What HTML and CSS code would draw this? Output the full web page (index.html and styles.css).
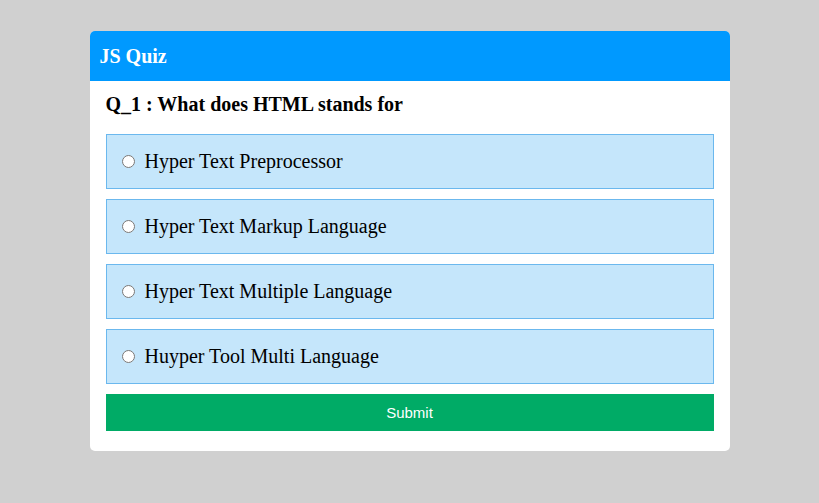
FILE: index.html
```html
<!DOCTYPE html>
<html>
<head>
<meta charset="utf-8">
<link rel="stylesheet" href="styles.css">
</head>
<body>
<div class="card">
  <div class="card-header">JS Quiz</div>
  <div class="card-body">
    <h3 class="question">Q_1 : What does HTML stands for</h3>
    <div class="options">
      <label class="option"><input type="radio" name="q1"><span>Hyper Text Preprocessor</span></label>
      <label class="option"><input type="radio" name="q1"><span>Hyper Text Markup Language</span></label>
      <label class="option"><input type="radio" name="q1"><span>Hyper Text Multiple Language</span></label>
      <label class="option"><input type="radio" name="q1"><span>Huyper Tool Multi Language</span></label>
    </div>
    <button class="submit">Submit</button>
  </div>
</div>
</body>
</html>
```
FILE: styles.css
```css
html, body {
  margin: 0;
  padding: 0;
}
body {
  background: #d0d0d0;
  font-family: "Liberation Serif", "Times New Roman", serif;
  display: flex;
  justify-content: center;
  padding-top: 31px;
}
.card {
  width: 640px;
  background: #ffffff;
  border-radius: 5px;
  overflow: hidden;
}
.card-header {
  height: 50px;
  background: #0099ff;
  color: #ffffff;
  font-weight: bold;
  font-size: 20px;
  display: flex;
  align-items: center;
  padding-left: 10px;
}
.card-body {
  padding: 0 16px 20px;
}
.question {
  margin: 0;
  padding: 12px 0 19px;
  font-size: 20px;
  line-height: 22px;
  font-weight: bold;
  color: #000;
}
.options {
  display: flex;
  flex-direction: column;
  gap: 10px;
}
.option {
  height: 53px;
  display: flex;
  align-items: center;
  border: 1px solid #6bb8ee;
  background: #c5e6fb;
  font-size: 20px;
  color: #000;
  padding-left: 15px;
}
.option input {
  margin: 0 10px 0 0;
  width: 13px;
  height: 13px;
}
.submit {
  margin-top: 10px;
  width: 100%;
  height: 37px;
  border: none;
  background: #00ab66;
  color: #ffffff;
  font-family: "Liberation Sans", Arial, sans-serif;
  font-size: 15px;
  display: block;
}
```
